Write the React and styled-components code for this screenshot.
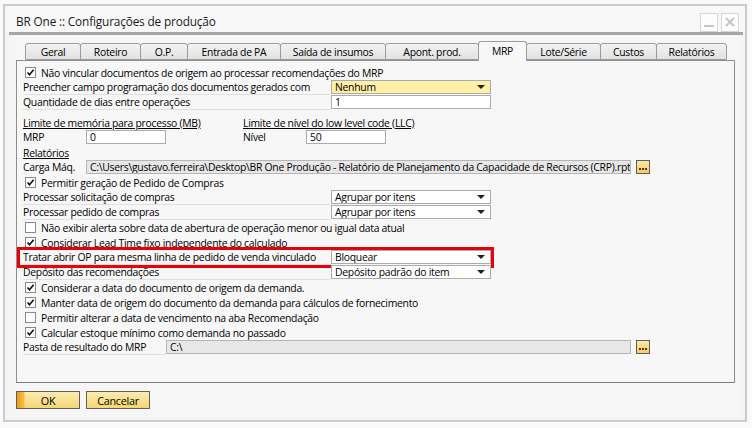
import React from 'react';
import styled, { createGlobalStyle, css } from 'styled-components';

const Global = createGlobalStyle`
  body {
    margin: 0;
    background: #fafafa;
    font-family: 'Open Sans', 'Noto Sans', sans-serif;
    font-size: 10.4px;
    letter-spacing: -0.28px;
    color: #000;
  }
`;

const Window = styled.div`
  margin: 4px 0 0 3px;
  width: 744px;
  height: 418px;
  box-sizing: border-box;
  border: 2px solid #cbcbcb;
  background: #f4f4f4;
  display: flex;
  flex-direction: column;
`;

const TitleBar = styled.div`
  height: 26px;
  display: flex;
  align-items: center;
  justify-content: space-between;
  padding: 0 6px 0 11px;
  background: #f8f8f8;
`;

const Title = styled.div`
  font-size: 11.8px;
  letter-spacing: -0.15px;
  color: #1a1a1a;
  padding-top: 4px;
`;

const WinButtons = styled.div`
  display: flex;
  gap: 3px;
  padding-top: 6px;
`;

const WinButton = styled.div`
  width: 18px;
  height: 19px;
  box-sizing: border-box;
  border: 1px solid #d6d6d6;
  background: #fdfdfd;
  display: flex;
  align-items: center;
  justify-content: center;
`;

const Divider = styled.div`
  height: 3px;
  margin: 0 2px 0 4px;
  background: #a6a6a6;
`;

const Content = styled.div`
  flex: 1;
  padding: 6px 0 0 7px;
  background: #f6f6f6;
  margin: 0 4px 3px 4px;
`;

const TabStrip = styled.div`
  display: flex;
  align-items: flex-end;
  height: 19px;
  padding-left: 10px;
  position: relative;
  z-index: 1;
`;

const Tab = styled.div`
  width: ${(p) => p.$w}px;
  height: ${(p) => (p.$active ? 20 : 17)}px;
  box-sizing: border-box;
  margin-left: -1px;
  margin-bottom: ${(p) => (p.$active ? -1 : 0)}px;
  border: 1px solid #9c9c9c;
  border-bottom: ${(p) => (p.$active ? 'none' : '1px solid #9c9c9c')};
  border-radius: 3px 3px 0 0;
  background: ${(p) =>
    p.$active ? '#f7f7f7' : 'linear-gradient(#f3f3f3, #e2e2e2)'};
  display: flex;
  align-items: center;
  justify-content: center;
  padding-bottom: ${(p) => (p.$active ? 2 : 0)}px;
  white-space: nowrap;
`;

const Panel = styled.div`
  width: 719px;
  height: 323px;
  box-sizing: border-box;
  border: 1px solid #8e8e8e;
  border-bottom-color: #7c7c7c;
  background: #f7f7f7;
  padding: 4px 0 0 6px;
`;

const Row = styled.div`
  display: flex;
  height: 15px;
  align-items: center;
  position: relative;
  margin-top: ${(p) => p.$gap || 0}px;

  ${(p) =>
    p.$highlight &&
    css`
      &::after {
        content: '';
        position: absolute;
        left: -6px;
        top: -3px;
        width: 477px;
        height: 21px;
        box-sizing: border-box;
        border: 3px solid #e8000b;
        pointer-events: none;
      }
    `}
`;

const Group = styled.div`
  display: flex;
  align-items: center;
  width: ${(p) => p.$w}px;
  height: 15px;
`;

const Label = styled.div`
  width: ${(p) => p.$w}px;
  height: 15px;
  box-sizing: border-box;
  display: flex;
  align-items: center;
  white-space: nowrap;
  border-bottom: 1px solid ${(p) => (p.$line ? '#e0e0e0' : 'transparent')};
`;

const Header = styled.div`
  width: ${(p) => p.$w || 'auto'}px;
  text-decoration: underline;
  white-space: nowrap;
`;

const Field = styled.div`
  width: ${(p) => p.$w}px;
  height: 14px;
  align-self: flex-start;
  box-sizing: border-box;
  border: 1px solid ${(p) => (p.$gray ? '#b5b5b5' : '#ababab')};
  background: ${(p) => (p.$yellow ? '#feefa6' : p.$gray ? '#e7e7e7' : '#fff')};
  padding: 0 3px;
  display: flex;
  align-items: center;
  justify-content: space-between;
  white-space: nowrap;
  overflow: hidden;
`;

const Arrow = styled.span`
  width: 0;
  height: 0;
  margin-right: 2px;
  border-left: 4px solid transparent;
  border-right: 4px solid transparent;
  border-top: 4px solid #222;
`;

const Check = styled.div`
  width: 11px;
  height: 11px;
  box-sizing: border-box;
  margin: 0 5px 0 2px;
  border: 1px solid #8a8a8a;
  background: #fff;
  display: flex;
  align-items: center;
  justify-content: center;
`;

const Browse = styled.div`
  width: 14px;
  height: 14px;
  align-self: flex-start;
  margin-left: 5px;
  box-sizing: border-box;
  border: 1px solid #5e5e5e;
  background: linear-gradient(#fbe8a6, #f2cf63);
  display: flex;
  align-items: flex-end;
  justify-content: center;
  gap: 1px;
  padding-bottom: 3px;
`;

const Dot = styled.span`
  width: 2px;
  height: 2px;
  background: #6b2a1a;
`;

const Footer = styled.div`
  display: flex;
  gap: 6px;
  margin-top: 8px;
`;

const Button = styled.div`
  width: 64px;
  height: 18px;
  box-sizing: border-box;
  border: 1px solid #5f5f5f;
  background: ${(p) =>
    p.$focus
      ? 'linear-gradient(90deg, #f29a16 0, #f7be45 7px, transparent 8px), linear-gradient(#fcecb0, #f5d675)'
      : 'linear-gradient(#fcecb0, #f5d675)'};
  display: flex;
  align-items: center;
  justify-content: center;
  font-size: 10.8px;
`;

function CheckBox({ checked }) {
  return (
    <Check>
      {checked && (
        <svg width="9" height="9" viewBox="0 0 9 9">
          <path d="M1.5 4.5 L3.5 6.8 L7.6 1.8" fill="none" stroke="#111" strokeWidth="1.6" />
        </svg>
      )}
    </Check>
  );
}

function CheckRow({ checked, children }) {
  return (
    <Row>
      <CheckBox checked={checked} />
      {children}
    </Row>
  );
}

function SelectRow({ label, value, yellow, highlight }) {
  return (
    <Row $highlight={highlight}>
      <Label $w={308} $line>
        {label}
      </Label>
      <Field $w={160} $yellow={yellow}>
        {value}
        <Arrow />
      </Field>
    </Row>
  );
}

function BrowseButton() {
  return (
    <Browse>
      <Dot />
      <Dot />
      <Dot />
    </Browse>
  );
}

const tabs = [
  ['Geral', 56],
  ['Roteiro', 61],
  ['O.P.', 48],
  ['Entrada de PA', 94],
  ['Saída de insumos', 106],
  ['Apont. prod.', 94],
  ['MRP', 49],
  ['Lote/Série', 75],
  ['Custos', 57],
  ['Relatórios', 71],
];

export default function App() {
  return (
    <>
      <Global />
      <Window>
        <TitleBar>
          <Title>BR One :: Configurações de produção</Title>
          <WinButtons>
            <WinButton>
              <svg width="12" height="12" viewBox="0 0 12 12">
                <rect x="1" y="9" width="10" height="2" fill="#c4c4c4" />
              </svg>
            </WinButton>
            <WinButton>
              <svg width="12" height="12" viewBox="0 0 12 12">
                <path d="M2 2 L10 10 M10 2 L2 10" stroke="#c4c4c4" strokeWidth="2" />
              </svg>
            </WinButton>
          </WinButtons>
        </TitleBar>
        <Divider />
        <Content>
          <TabStrip>
            {tabs.map(([name, w]) => (
              <Tab key={name} $w={w} $active={name === 'MRP'}>
                {name}
              </Tab>
            ))}
          </TabStrip>
          <Panel>
            <CheckRow checked>
              Não vincular documentos de origem ao processar recomendações do MRP
            </CheckRow>
            <SelectRow label="Preencher campo programação dos documentos gerados com" value="Nenhum" yellow />
            <Row>
              <Label $w={308} $line>
                Quantidade de dias entre operações
              </Label>
              <Field $w={160}>1</Field>
            </Row>

            <Row $gap={5}>
              <Header $w={220}>Limite de memória para processo (MB)</Header>
              <Header>Limite de nível do low level code (LLC)</Header>
            </Row>
            <Row>
              <Group $w={220}>
                <Label $w={63}>MRP</Label>
                <Field $w={80}>0</Field>
              </Group>
              <Group $w={150}>
                <Label $w={63}>Nível</Label>
                <Field $w={80}>50</Field>
              </Group>
            </Row>
            <Row>
              <Header>Relatórios</Header>
            </Row>
            <Row>
              <Label $w={63}>Carga Máq.</Label>
              <Field $w={545} $gray>
                C:\Users\gustavo.ferreira\Desktop\BR One Produção - Relatório de Planejamento da Capacidade de Recursos (CRP).rpt
              </Field>
              <BrowseButton />
            </Row>
            <CheckRow checked>Permitir geração de Pedido de Compras</CheckRow>
            <SelectRow label="Processar solicitação de compras" value="Agrupar por itens" />
            <SelectRow label="Processar pedido de compras" value="Agrupar por itens" />
            <CheckRow>Não exibir alerta sobre data de abertura de operação menor ou igual data atual</CheckRow>
            <CheckRow checked>Considerar Lead Time fixo independente do calculado</CheckRow>
            <SelectRow
              label="Tratar abrir OP para mesma linha de pedido de venda vinculado"
              value="Bloquear"
              highlight
            />
            <SelectRow label="Depósito das recomendações" value="Depósito padrão do item" />
            <CheckRow checked>Considerar a data do documento de origem da demanda.</CheckRow>
            <CheckRow checked>Manter data de origem do documento da demanda para cálculos de fornecimento</CheckRow>
            <CheckRow>Permitir alterar a data de vencimento na aba Recomendação</CheckRow>
            <CheckRow checked>Calcular estoque mínimo como demanda no passado</CheckRow>
            <Row>
              <Label $w={143} $line>
                Pasta de resultado do MRP
              </Label>
              <Field $w={465} $gray>
                C:\
              </Field>
              <BrowseButton />
            </Row>
          </Panel>
          <Footer>
            <Button $focus>OK</Button>
            <Button>Cancelar</Button>
          </Footer>
        </Content>
      </Window>
    </>
  );
}
